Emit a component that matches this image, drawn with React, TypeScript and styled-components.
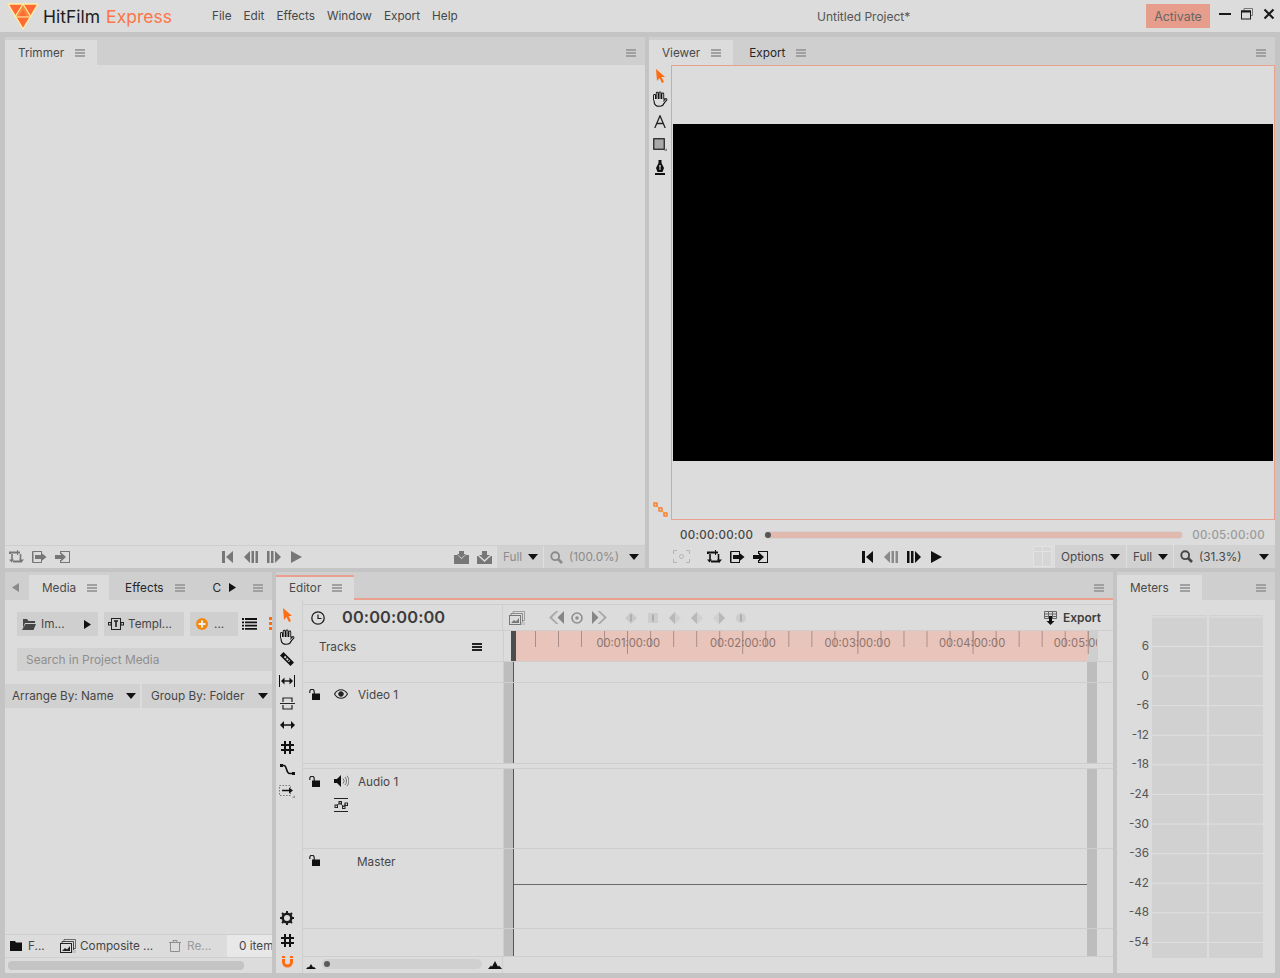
import React from 'react';
import styled, { createGlobalStyle } from 'styled-components';

const GlobalStyle = createGlobalStyle`
    html, body {
        margin: 0;
        padding: 0;
        background: #c4c4c4;
    }
    * {
        box-sizing: border-box;
    }
    svg {
        display: block;
        flex: none;
    }
`;

const SALMON = '#e9a08e';
const PANEL = '#dcdcdc';
const STRIP = '#cfcfcf';
const LINE = '#cecece';
const ORANGE = '#ff6d10';

const St = {
    Page: styled.div`
        width: 1280px;
        height: 978px;
        overflow: hidden;
        display: flex;
        flex-direction: column;
        background: #c4c4c4;
        font-family: Inter, 'Liberation Sans', sans-serif;
        font-size: 11.75px;
        color: #464646;
    `,
    TitleBar: styled.header`
        height: 32px;
        flex: none;
        display: grid;
        grid-template-columns: 212px 605px 329px 64px 1fr;
        align-items: center;
        background: ${PANEL};
    `,
    Brand: styled.div`
        display: flex;
        align-items: center;
        gap: 4px;
        padding-left: 7px;
        font-size: 17.5px;
        color: #1d1d1d;
        span {
            color: #ff7448;
            margin-left: 6px;
        }
    `,
    Menu: styled.nav`
        display: flex;
        gap: 12px;
        margin-top: -1px;
    `,
    ProjectTitle: styled.div`
        font-size: 12px;
        color: #555;
    `,
    Activate: styled.div`
        height: 24px;
        display: flex;
        align-items: center;
        justify-content: center;
        background: #e69d8b;
        color: #666;
        font-size: 12.4px;
    `,
    WindowControls: styled.div`
        display: flex;
        align-items: center;
        gap: 10px;
        padding-left: 9px;
        margin-top: -4px;
    `,
    Workspace: styled.main`
        flex: 1;
        display: flex;
        flex-direction: column;
        gap: 4px;
        padding: 5px;
    `,
    TopRow: styled.div`
        height: 531px;
        display: flex;
        gap: 4px;
    `,
    BottomRow: styled.div`
        height: 401px;
        display: flex;
        gap: 4px;
    `,
    Panel: styled.section<{ $w: number }>`
        width: ${({ $w }) => $w}px;
        flex: none;
        display: flex;
        flex-direction: column;
        background: ${PANEL};
        overflow: hidden;
    `,
    Strip: styled.div<{ $accent?: boolean }>`
        height: 28px;
        flex: none;
        display: flex;
        gap: 3px;
        padding-top: 3px;
        background: ${STRIP};
        border-bottom: ${({ $accent }) => ($accent ? `2px solid ${SALMON}` : 'none')};
    `,
    Tab: styled.div<{ $active?: boolean; $accent?: boolean; $gap?: number }>`
        height: 25px;
        flex: none;
        display: flex;
        align-items: center;
        gap: ${({ $gap }) => $gap ?? 11}px;
        padding: 0 12px ${({ $accent }) => ($accent ? '2px' : '0')} 13px;
        background: ${({ $active }) => ($active ? PANEL : 'transparent')};
        color: ${({ $active }) => ($active ? '#4a4a4a' : '#262626')};
        border-top: ${({ $accent }) => ($accent ? `2px solid ${SALMON}` : 'none')};
        margin-bottom: ${({ $accent }) => ($accent ? '-2px' : '0')};
    `,
    StripEnd: styled.div`
        margin-left: auto;
        height: 25px;
        flex: none;
        display: flex;
        align-items: center;
        padding-right: 9px;
    `,
    StripArrow: styled.div<{ $w: number }>`
        width: ${({ $w }) => $w}px;
        height: 25px;
        flex: none;
        display: flex;
        align-items: center;
        justify-content: center;
    `,
    Hamburger: styled.div<{ $dark?: boolean }>`
        width: 10px;
        height: 8px;
        border-top: 2px solid ${({ $dark }) => ($dark ? '#222' : '#a0a0a0')};
        border-bottom: 2px solid ${({ $dark }) => ($dark ? '#222' : '#a0a0a0')};
        position: relative;
        &::after {
            content: '';
            position: absolute;
            left: 0;
            right: 0;
            top: 1px;
            height: 2px;
            background: ${({ $dark }) => ($dark ? '#222' : '#a0a0a0')};
        }
    `,
    EmptyBody: styled.div`
        flex: 1;
    `,
    Footer: styled.div`
        height: 23px;
        flex: none;
        display: flex;
        align-items: stretch;
        border-top: 1px solid ${LINE};
    `,
    IconRow: styled.div<{ $ml?: number; $auto?: boolean }>`
        display: flex;
        align-items: center;
        margin-left: ${({ $ml, $auto }) => ($auto ? 'auto' : `${$ml ?? 0}px`)};
    `,
    IconBtn: styled.div<{ $c?: string; $w?: number }>`
        width: ${({ $w }) => $w ?? 23}px;
        flex: none;
        display: flex;
        align-items: center;
        justify-content: center;
        color: ${({ $c }) => $c ?? '#111'};
    `,
    Dropdown: styled.div<{ $w: number; $off?: boolean }>`
        width: ${({ $w }) => $w}px;
        flex: none;
        display: flex;
        align-items: center;
        gap: 6px;
        padding: 0 6px;
        background: #d1d1d1;
        border-left: 1px solid #dfdfdf;
        color: ${({ $off }) => ($off ? '#8b8b8b' : '#474747')};
    `,
    DropArrow: styled.div`
        margin-left: auto;
        width: 0;
        height: 0;
        flex: none;
        border-left: 5px solid transparent;
        border-right: 5px solid transparent;
        border-top: 6px solid #111;
    `,
    ViewerBody: styled.div`
        height: 455px;
        flex: none;
        display: flex;
    `,
    ViewerTools: styled.div`
        width: 22px;
        flex: none;
        display: flex;
        flex-direction: column;
        margin-top: -1px;
        padding-bottom: 3px;
    `,
    Tool: styled.div<{ $h: number; $c?: string; $push?: boolean }>`
        height: ${({ $h }) => $h}px;
        flex: none;
        display: flex;
        align-items: center;
        justify-content: center;
        color: ${({ $c }) => $c ?? '#111'};
        margin-top: ${({ $push }) => ($push ? 'auto' : '0')};
    `,
    Canvas: styled.div`
        flex: 1;
        display: flex;
        align-items: center;
        justify-content: center;
        border: 1px solid ${SALMON};
    `,
    Picture: styled.div`
        width: 600px;
        height: 337px;
        background: #000;
    `,
    ScrubRow: styled.div`
        height: 25px;
        flex: none;
        display: flex;
        align-items: center;
        padding: 4px 0 0 31px;
    `,
    TimeCode: styled.div<{ $off?: boolean }>`
        font-size: 11.5px;
        font-weight: 500;
        letter-spacing: 0.3px;
        color: ${({ $off }) => ($off ? '#9a9a9a' : '#444')};
    `,
    ScrubTrack: styled.div`
        width: 417px;
        height: 6px;
        margin: 0 10px 0 12px;
        display: flex;
        align-items: center;
        border-radius: 3px;
        background: #e2b9af;
        box-shadow: 0 0 0 1px #d3d3d3;
    `,
    ScrubDot: styled.div`
        width: 6px;
        height: 6px;
        border-radius: 50%;
        background: #555;
    `,
    ViewerFooter: styled.div`
        height: 23px;
        flex: none;
        display: flex;
        align-items: stretch;
        padding-left: 21px;
    `,
    GridSwatch: styled.div`
        width: 17px;
        margin: 2px 3px 2px 0;
        background: #d1d1d1;
        display: grid;
        grid-template-columns: 1fr 1fr;
        grid-template-rows: 4px 1fr;
        gap: 1px;
        div {
            background: #d6d6d6;
            outline: 0.5px solid #e2e2e2;
        }
    `,
    MediaBody: styled.div`
        flex: 1;
        display: flex;
        flex-direction: column;
        padding-top: 12px;
        overflow: hidden;
    `,
    MediaTools: styled.div`
        height: 24px;
        flex: none;
        display: flex;
        gap: 6px;
        margin-left: 12px;
    `,
    MediaButton: styled.div<{ $w: number; $pad: number; $gap: number }>`
        width: ${({ $w }) => $w}px;
        flex: none;
        display: flex;
        align-items: center;
        gap: ${({ $gap }) => $gap}px;
        padding: 0 7px 0 ${({ $pad }) => $pad}px;
        background: ${STRIP};
    `,
    ButtonArrow: styled.div`
        margin-left: auto;
    `,
    MediaPlain: styled.div`
        width: 16px;
        flex: none;
        margin-left: -3px;
        display: flex;
        align-items: center;
        justify-content: center;
    `,
    OrangeDots: styled.div`
        width: 3px;
        height: 13px;
        margin: 5px 0 0 6px;
        flex: none;
        background: repeating-linear-gradient(${ORANGE} 0 3px, transparent 3px 5px);
    `,
    Search: styled.div`
        height: 23px;
        flex: none;
        margin: 12px 0 0 12px;
        padding-left: 9px;
        display: flex;
        align-items: center;
        background: #d1d1d1;
        color: #8f8f8f;
        font-size: 11.9px;
    `,
    ArrangeRow: styled.div`
        height: 24px;
        flex: none;
        margin-top: 13px;
        display: flex;
        gap: 2px;
    `,
    ArrangeItem: styled.div<{ $w: number; $pad: number }>`
        width: ${({ $w }) => $w}px;
        display: flex;
        align-items: center;
        padding: 0 4px 1px ${({ $pad }) => $pad}px;
        background: #d1d1d1;
    `,
    MediaFooter: styled.div`
        height: 24px;
        flex: none;
        display: flex;
        align-items: stretch;
        border-top: 1px solid ${LINE};
        border-bottom: 1px solid ${LINE};
        white-space: nowrap;
    `,
    MediaFootItem: styled.div<{ $w: number; $gap: number; $off?: boolean }>`
        width: ${({ $w }) => $w}px;
        flex: none;
        display: flex;
        align-items: center;
        gap: ${({ $gap }) => $gap}px;
        padding-left: 5px;
        color: ${({ $off }) => ($off ? '#9a9a9a' : '#464646')};
        svg {
            color: ${({ $off }) => ($off ? '#8f8f8f' : '#111')};
        }
    `,
    ItemCount: styled.div`
        flex: 1;
        display: flex;
        align-items: center;
        padding-left: 12px;
        background: #e8e8e8;
        overflow: hidden;
    `,
    MediaScrollRow: styled.div`
        height: 15px;
        flex: none;
        padding: 3px 0 0 3px;
    `,
    MediaThumb: styled.div`
        width: 236px;
        height: 9px;
        border-radius: 4px;
        background: #c4c4c4;
    `,
    EditorBody: styled.div`
        flex: 1;
        display: flex;
        min-height: 0;
    `,
    EditorTools: styled.div`
        width: 27px;
        flex: none;
        display: flex;
        flex-direction: column;
        padding: 4px 4px 0 0;
        border-right: 1px solid ${LINE};
    `,
    EditorMain: styled.div`
        flex: 1;
        display: flex;
        flex-direction: column;
        padding-top: 4px;
        overflow: hidden;
    `,
    Row: styled.div<{ $h: number }>`
        height: ${({ $h }) => $h}px;
        flex: none;
        display: flex;
        border-bottom: 1px solid ${LINE};
    `,
    TrackHead: styled.div`
        width: 200px;
        flex: none;
        display: flex;
        flex-direction: column;
        padding: 3px 0 0 6px;
    `,
    TrackLine: styled.div<{ $mt?: number }>`
        display: flex;
        align-items: center;
        height: 16px;
        margin-top: ${({ $mt }) => $mt ?? 0}px;
    `,
    TrackSlot: styled.div<{ $w: number; $ml?: number }>`
        width: ${({ $w }) => $w}px;
        flex: none;
        margin-left: ${({ $ml }) => $ml ?? 0}px;
        display: flex;
        align-items: center;
        justify-content: center;
    `,
    TrackName: styled.div<{ $ml: number; $pt: number }>`
        margin-left: ${({ $ml }) => $ml}px;
        padding-top: ${({ $pt }) => $pt}px;
    `,
    Gutter: styled.div<{ $clear?: boolean }>`
        width: 11px;
        flex: none;
        position: relative;
        background: ${({ $clear }) => ($clear ? 'transparent' : '#bdbdbd')};
        border-right: ${({ $clear }) => ($clear ? 'none' : '1px solid #555')};
        border-left: 1px solid ${LINE};
    `,
    Playhead: styled.div`
        position: absolute;
        z-index: 1;
        top: 0;
        bottom: 0;
        left: 7px;
        width: 5px;
        background: #4d4d4d;
    `,
    Lane: styled.div`
        width: 573px;
        flex: none;
    `,
    MasterLevel: styled.div`
        height: 1px;
        margin-top: 35px;
        background: #6a6a6a;
    `,
    VScroll: styled.div`
        width: 10px;
        flex: none;
        background: #bdbdbd;
    `,
    HeaderRow: styled.div`
        height: 27px;
        flex: none;
        display: flex;
        border-top: 1px solid ${LINE};
        border-bottom: 1px solid ${LINE};
    `,
    ClockCell: styled.div`
        width: 200px;
        flex: none;
        display: flex;
        align-items: center;
        gap: 17px;
        padding-left: 8px;
        border-right: 1px solid ${LINE};
    `,
    MainTime: styled.div`
        font-size: 16.4px;
        font-weight: 600;
        letter-spacing: 0.1px;
        color: #3c3c3c;
        margin-top: -1px;
    `,
    ComposerTools: styled.div`
        flex: 1;
        display: flex;
        align-items: center;
        padding-left: 6px;
    `,
    ExportLink: styled.div`
        margin-left: auto;
        margin-right: 12px;
        display: flex;
        align-items: center;
        gap: 6px;
        font-size: 12px;
        font-weight: 600;
        color: #3e3e3e;
    `,
    TracksCell: styled.div`
        width: 200px;
        flex: none;
        display: flex;
        align-items: center;
        justify-content: space-between;
        padding: 2px 21px 0 16px;
    `,
    Ruler: styled.div`
        width: 584px;
        flex: none;
        display: flex;
        padding-left: 57px;
        overflow: hidden;
        white-space: nowrap;
        font-size: 11.2px;
        color: #8d736d;
        line-height: 25px;
        border-right: 1px solid ${LINE};
        background-color: #cfcfcf;
        background-image: linear-gradient(90deg, #a98c85 1px, transparent 1px),
            linear-gradient(90deg, #a98c85 1px, transparent 1px), linear-gradient(#e8c4ba, #e8c4ba);
        background-size: 23.04px 16px, 115.2px 23px, 573px 100%;
        background-position: 21px 0, 113px 0, 0 0;
        background-repeat: repeat-x, repeat-x, no-repeat;
    `,
    RulerLabel: styled.div`
        width: 114.6px;
        flex: none;
        text-align: center;
    `,
    BottomBar: styled.div`
        flex: 1;
        display: flex;
    `,
    ZoomCell: styled.div`
        width: 200px;
        flex: none;
        display: flex;
        align-items: flex-end;
        gap: 6px;
        padding: 0 0 4px 3px;
        border-right: 1px solid ${LINE};
    `,
    ZoomTrack: styled.div`
        width: 162px;
        height: 10px;
        border-radius: 5px;
        background: #d0d0d0;
        display: flex;
        align-items: center;
        padding-left: 2px;
    `,
    ZoomDot: styled.div`
        width: 6px;
        height: 6px;
        border-radius: 50%;
        background: #5c5c5c;
    `,
    MeterBody: styled.div`
        flex: 1;
        display: flex;
        padding: 15px 12px 20px 0;
    `,
    MeterScale: styled.div`
        width: 35px;
        flex: none;
        padding: 17px 3px 0 0;
        text-align: right;
        color: #555;
    `,
    MeterTick: styled.div`
        height: 29.6px;
        line-height: 29.6px;
    `,
    MeterBars: styled.div`
        flex: 1;
        display: flex;
        gap: 2px;
    `,
    MeterBar: styled.div`
        flex: 1;
        background-color: #d1d1d1;
        background-image: linear-gradient(#e0e0e0 1px, transparent 1px);
        background-size: 100% 29.6px;
        background-position: 0 1.4px;
    `,
};

const Ico = ({ s = 16, h, children }: { s?: number; h?: number; children: React.ReactNode }) => (
    <svg width={s} height={h ?? s} viewBox={`0 0 ${s} ${h ?? s}`} fill="currentColor">
        {children}
    </svg>
);

const Logo = () => (
    <svg width="32" height="28" viewBox="0 0 32 28">
        <path d="M1 2h30L16 27z" fill="#ff6a35" stroke="#fff0a6" strokeWidth="1.4" strokeLinejoin="round" />
        <path d="M16 2l8 13H8z" fill="#f58a3c" stroke="#fff0a6" strokeWidth="1.2" strokeLinejoin="round" />
        <path d="M16 8l3.6 6h-7.2z" fill="#ff6a35" />
    </svg>
);

const Minimize = () => (
    <Ico s={12} h={2}>
        <rect width="12" height="2" fill="#1a1a1a" />
    </Ico>
);

const Restore = () => (
    <svg width="12" height="12" viewBox="0 0 12 12" fill="none">
        <path d="M3 2.5V.5h8.5v7H9.5" stroke="#777" />
        <rect x=".5" y="3" width="9" height="8" stroke="#1a1a1a" />
        <rect x="0" y="2.5" width="10" height="2" fill="#1a1a1a" />
    </svg>
);

const Close = () => (
    <svg width="12" height="12" viewBox="0 0 12 12">
        <path d="M1.5 1.5l9 9M10.5 1.5l-9 9" stroke="#1a1a1a" strokeWidth="2.1" />
    </svg>
);

const LoopIcon = () => (
    <svg width="15" height="14" viewBox="0 0 15 14" fill="none" stroke="currentColor" strokeWidth="2">
        <path d="M1 4V2.5h10M12 10v1.5H4" />
        <path d="M3 4v6M11.5 4v7" strokeWidth="1.6" />
        <path d="M0 9.5h5L2.5 12.5zM10 9.5h5l-2.5 3z" fill="currentColor" stroke="none" />
        <path d="M8.5 0v5" strokeWidth="1" />
    </svg>
);

const OutIcon = () => (
    <Ico s={15} h={12}>
        <path d="M1 0h9v3H9V1H1.5v10H9V9h1v3H1a1 1 0 0 1-1-1V1a1 1 0 0 1 1-1z" />
        <path d="M3 4h6V1.5L14.5 6 9 10.5V8H3z" />
    </Ico>
);

const InIcon = () => (
    <Ico s={15} h={12}>
        <path d="M5 0h10v12H5V9h1v2h8V1H6v2H5z" />
        <path d="M0 4h6V1.5L11 6l-5 4.5V8H0z" />
    </Ico>
);

const FirstIcon = () => (
    <Ico s={11} h={12}>
        <rect width="3" height="12" />
        <path d="M11 0v12L4 6z" />
    </Ico>
);
const PrevIcon = () => (
    <Ico s={14} h={12}>
        <path d="M6 0v12L0 6z" />
        <rect x="7.5" width="2.5" height="12" />
        <rect x="11.5" width="2.5" height="12" />
    </Ico>
);
const NextIcon = () => (
    <Ico s={14} h={12}>
        <rect width="2.5" height="12" />
        <rect x="4" width="2.5" height="12" />
        <path d="M8 0v12l6-6z" />
    </Ico>
);
const PlayIcon = () => (
    <Ico s={11} h={12}>
        <path d="M0 0v12l11-6z" />
    </Ico>
);

const Transport = ({ c, c2, ml }: { c: string; c2?: string; ml: number }) => (
    <St.IconRow $ml={ml}>
        <St.IconBtn $c={c}>
            <FirstIcon />
        </St.IconBtn>
        <St.IconBtn $c={c2 ?? c}>
            <PrevIcon />
        </St.IconBtn>
        <St.IconBtn $c={c}>
            <NextIcon />
        </St.IconBtn>
        <St.IconBtn $c={c}>
            <PlayIcon />
        </St.IconBtn>
    </St.IconRow>
);

const MagnifyIcon = () => (
    <svg width="13" height="13" viewBox="0 0 13 13" fill="none" stroke="currentColor">
        <circle cx="5.2" cy="5.2" r="3.9" strokeWidth="1.9" />
        <path d="M8 8l4 4" strokeWidth="2.6" />
    </svg>
);

const SnapA = () => (
    <Ico s={15} h={13}>
        <path d="M5 0h5v3h2l-4.5 4L3 3h2z" />
        <path d="M0 4h3.5l4 4 4-4H15v9H0z" />
    </Ico>
);
const SnapB = () => (
    <Ico s={15} h={13}>
        <path d="M5 0h5v4h3L7.5 9 2 4h3z" />
        <path d="M0 5h1l6.5 6 6.5-6h1v8H0z" />
    </Ico>
);

const ArrowTool = () => (
    <Ico s={11} h={14}>
        <path d="M1 0l9 8H6.5l2.5 5-2 1-2.5-5L2 12z" />
    </Ico>
);
// fingers are drawn twice, a thick dark stroke under a thin light one, to get an outlined hand
const HandTool = () => (
    <svg width="16" height="16" viewBox="0 0 16 16" fill="none" strokeLinecap="round">
        <path d="M2.5 8V4.5M5.2 7V2.2M8 7V1.8M10.8 7V3M14 8.5l-3 3.5" stroke="#111" strokeWidth="2.8" />
        <path d="M1.8 7.5h10.2v3.5c0 2.700-2 4.300-4.800 4.300-3.200 0-4.700-2-5-4z" fill="#dcdcdc" stroke="#111" strokeWidth="1.1" />
        <path d="M2.500 9V4.500M5.200 9V2.200M8 9V1.800M10.800 9V3M14 8.500l-3 3.500" stroke="#dcdcdc" strokeWidth="1" />
    </svg>
);
const TextTool = () => (
    <svg width="12" height="13" viewBox="0 0 12 13" fill="none" stroke="#222" strokeWidth="1.3">
        <path d="M.8 13L6 .8 11.2 13M2.800 8.500h6.400" />
    </svg>
);
const ShapeTool = () => (
    <svg width="14" height="13" viewBox="0 0 14 13">
        <rect x=".75" y=".75" width="10.5" height="10.5" fill="#a9a9a9" stroke="#1c1c1c" strokeWidth="1.2" />
        <path d="M14 10v3h-3z" fill="#888" />
    </svg>
);
const PenTool = () => (
    <Ico s={10} h={15}>
        <path d="M3.5 0h3v3L9 8l-1.500 4h-5L1 8l2.500-5zM5 5a1 1 0 0 0-.5 1.800V10h1V6.800A1 1 0 0 0 5 5z" />
        <rect y="13" width="10" height="2" />
    </Ico>
);
const NodesIcon = () => (
    <svg width="15" height="15" viewBox="0 0 15 15" fill="#dcdcdc" stroke="#ff6d10" strokeWidth="1.2">
        <path d="M3 3l9 9" stroke="#f5b56a" />
        <rect x="1" y="1" width="3" height="3" />
        <rect x="6" y="6" width="3" height="3" />
        <rect x="11" y="11" width="3" height="3" />
    </svg>
);
const FocusIcon = () => (
    <svg width="17" height="13" viewBox="0 0 17 13" fill="none" stroke="#b4b4b4">
        <path d="M.5 4V.5H4M13 .5h3.500V4M.5 9v3.500H4M13 12.500h3.500V9" />
        <circle cx="8.5" cy="6.5" r="2" />
    </svg>
);

const FolderIcon = () => (
    <Ico s={14} h={12}>
        <path d="M0 1h5l1.500 2H13v2H3L1 10V1z" />
        <path d="M3.500 6H14l-2.500 6H0z" />
    </Ico>
);
const TemplateIcon = () => (
    <svg width="16" height="12" viewBox="0 0 16 12" fill="none" stroke="#222">
        <rect x="3.5" y=".5" width="9" height="11" />
        <path d="M6 3h4M8 3v6" strokeWidth="1.6" />
        <rect x=".5" y="4.5" width="2.5" height="2.5" />
        <rect x="13" y="4.5" width="2.5" height="2.5" />
    </svg>
);
const PlusIcon = () => (
    <svg width="12" height="12" viewBox="0 0 12 12">
        <circle cx="6" cy="6" r="6" fill="#f28a12" />
        <path d="M6 2.500v7M2.500 6h7" stroke="#eee" strokeWidth="2" />
    </svg>
);
const ListIcon = () => (
    <svg width="15" height="12" viewBox="0 0 15 12">
        <path d="M0 1h2M3 1h12M0 4.300h2M3 4.300h12M0 7.600h2M3 7.600h12M0 10.900h2M3 10.900h12" stroke="#111" strokeWidth="1.8" />
    </svg>
);
const SmallArrow = ({ right, c }: { right?: boolean; c: string }) => (
    <svg width="7" height="9" viewBox="0 0 7 9">
        <path d={right ? 'M0 0v9l7-4.500z' : 'M7 0v9L0 4.500z'} fill={c} />
    </svg>
);
const SolidFolder = () => (
    <Ico s={12} h={10}>
        <path d="M0 0h5l1 1.500h6V10H0z" />
    </Ico>
);
const CompStack = ({ c = '#222' }: { c?: string }) => (
    <svg width="16" height="14" viewBox="0 0 16 14" fill="none" stroke={c}>
        <path d="M4 2.500V.5h11.500v9H13" strokeOpacity=".6" />
        <path d="M2 4.500V2.500h11.500v9H11" strokeOpacity=".8" />
        <rect x=".5" y="4.5" width="11" height="9" fill="#dcdcdc" />
        <path d="M2 12l3-3 2 1.500L10 7v5z" fill={c} stroke="none" />
        <rect x="12" y="11" width="4" height="3" fill="#c4c4c4" stroke="none" />
    </svg>
);
const TrashIcon = () => (
    <svg width="12" height="12" viewBox="0 0 12 12" fill="none" stroke="currentColor">
        <path d="M0 2.500h12M4 2.500V.5h4v2M1.500 2.500v9h9v-9" />
    </svg>
);

const RazorTool = () => (
    <svg width="16" height="16" viewBox="0 0 16 16">
        <path d="M4.500 1L15 11.500 11.500 15 1 4.500z" fill="#111" />
        <path d="M5.500 5.500l5 5" stroke="#ddd" strokeWidth="1.8" strokeDasharray="2 1" />
    </svg>
);
const SlipTool = () => (
    <svg width="16" height="12" viewBox="0 0 16 12" fill="#111" stroke="#111">
        <path d="M.5 0v12M15.500 0v12" />
        <path d="M3 6h10" strokeWidth="1.4" />
        <path d="M2 6l3.500-3.500v7zM14 6l-3.500-3.500v7z" stroke="none" />
    </svg>
);
const RippleTool = () => (
    <svg width="15" height="13" viewBox="0 0 15 13" fill="none" stroke="#222" strokeWidth="1.2">
        <path d="M3 5V1h9v4M3 8v4h9V8M0 6.500h15" />
    </svg>
);
const RollTool = () => (
    <svg width="15" height="8" viewBox="0 0 15 8">
        <path d="M3 4h9" stroke="#111" strokeWidth="1.5" />
        <path d="M0 4l4-4v8zM15 4l-4-4v8z" fill="#111" />
    </svg>
);
const HashTool = () => (
    <svg width="13" height="13" viewBox="0 0 13 13" stroke="#111" strokeWidth="2">
        <path d="M4 0v13M9 0v13M0 4h13M0 9h13" />
    </svg>
);
const CurveTool = () => (
    <svg width="15" height="11" viewBox="0 0 15 11" fill="none">
        <path d="M2 1.500h2c3 0 2 8 5.500 8H13" stroke="#111" strokeWidth="1.6" />
        <rect width="3" height="3" fill="#111" />
        <rect width="3" height="3" x="12" y="8" fill="#111" />
    </svg>
);
const MoveOutTool = () => (
    <svg width="16" height="13" viewBox="0 0 16 13" fill="none">
        <rect x=".5" y=".5" width="11" height="10" stroke="#777" strokeDasharray="1.500 1.500" />
        <path d="M3 5.500h9" stroke="#111" strokeWidth="1.5" />
        <path d="M10 2.500l4 3-4 3z" fill="#111" />
        <path d="M16 10v3h-3z" fill="#999" />
    </svg>
);
const GearIcon = () => (
    <svg width="14" height="14" viewBox="0 0 14 14" fill="none" stroke="#1c1c1c">
        <circle cx="7" cy="7" r="4.3" strokeWidth="2.6" />
        <path d="M7 0v2.500M7 11.500V14M0 7h2.500M11.500 7H14M2 2l1.800 1.800M10.200 10.200L12 12M12 2l-1.800 1.800M3.800 10.200L2 12" strokeWidth="2" />
    </svg>
);
const MagnetIcon = () => (
    <svg width="11" height="12" viewBox="0 0 11 12" fill="none">
        <path d="M1.500 0v6a4 4 0 0 0 8 0V0" stroke={ORANGE} strokeWidth="3" />
        <path d="M0 2.500h3M8 2.500h3" stroke="#dcdcdc" />
    </svg>
);

const ClockIcon = () => (
    <svg width="14" height="14" viewBox="0 0 14 14" fill="none" stroke="#1c1c1c">
        <circle cx="7" cy="7" r="6.2" strokeWidth="1.3" />
        <path d="M7 3.500V7.500H10.500" strokeWidth="1.2" />
    </svg>
);
const BackKeys = () => (
    <svg width="15" height="13" viewBox="0 0 15 13">
        <path d="M7 0L0 6.500 7 13h2.500L3 6.500 9.500 0z" fill="#aaa" />
        <path d="M15 0v13L8.500 6.500z" fill="#868686" />
    </svg>
);
const Target = () => (
    <svg width="12" height="12" viewBox="0 0 12 12" fill="none" stroke="#8e8e8e">
        <circle cx="6" cy="6" r="5" strokeWidth="1.6" />
        <circle cx="6" cy="6" r="1.8" fill="#8e8e8e" stroke="none" />
    </svg>
);
const ForwardKeys = () => (
    <svg width="15" height="13" viewBox="0 0 15 13">
        <path d="M0 0v13l6.500-6.500z" fill="#868686" />
        <path d="M8 0l7 6.500L8 13H5.500L12 6.500 5.500 0z" fill="#aaa" />
    </svg>
);
const Key = ({ kind }: { kind: 'diamond' | 'square' | 'left' | 'right' | 'pill' }) => (
    <svg width="14" height="12" viewBox="0 0 14 12">
        {kind === 'square' ? (
            <rect x="2" y="1" width="10" height="10" fill="#cdcdcd" />
        ) : kind === 'pill' ? (
            <circle cx="7" cy="6" r="5" fill="#cdcdcd" />
        ) : (
            <path d="M7 0l6 6-6 6-6-6z" fill={kind === 'diamond' ? '#c9c9c9' : '#d0d0d0'} />
        )}
        {kind === 'left' && <path d="M7 0v12L1 6z" fill="#b8b8b8" />}
        {kind === 'right' && <path d="M7 0v12l6-6z" fill="#b8b8b8" />}
        {(kind === 'diamond' || kind === 'square' || kind === 'pill') && <rect x="6" y="2.5" width="2" height="7" fill="#aeaeae" />}
    </svg>
);
const ExportIcon = () => (
    <svg width="13" height="14" viewBox="0 0 13 14">
        <path d="M.5.500h12v7H.5zM4.500.500v7M8.500.500v7M.5 3h12M.5 5.500h12" fill="none" stroke="#666" />
        <path d="M5 5h3v5h2.500l-4 4-4-4H5z" fill="#111" />
    </svg>
);

const LockIcon = () => (
    <svg width="12" height="11" viewBox="0 0 12 11" fill="none">
        <path d="M.8 4V2.500a2.200 2.200 0 0 1 4.400 0V5" stroke="#111" strokeWidth="1.1" />
        <rect x="3" y="4.5" width="8" height="6.5" fill="#111" />
    </svg>
);
const EyeIcon = () => (
    <svg width="14" height="10" viewBox="0 0 14 10" fill="none" stroke="#222">
        <path d="M.5 5C2.500 1.500 4.800.7 7 .7s4.500.8 6.500 4.300C11.500 8.500 9.200 9.300 7 9.300S2.500 8.500.5 5z" strokeWidth="1.1" />
        <circle cx="7" cy="5" r="2.3" fill="#222" />
    </svg>
);
const SpeakerIcon = () => (
    <svg width="15" height="12" viewBox="0 0 15 12" fill="none">
        <path d="M0 4h3l4-4v12L3 8H0z" fill="#111" />
        <path d="M9 3.500a3.500 3.500 0 0 1 0 5M11 2a6 6 0 0 1 0 8M13 .8a8 8 0 0 1 0 10.400" stroke="#777" />
    </svg>
);
const AutomationIcon = () => (
    <svg width="14" height="14" viewBox="0 0 14 14" fill="none" stroke="#222">
        <path d="M0 .5h14M0 13.500h14" />
        <path d="M2.500 8L6 4.500 9.500 9l2-3" strokeWidth=".8" />
        <rect x="1" y="7" width="2.5" height="2.5" />
        <rect x="5" y="3.5" width="2.5" height="2.5" />
        <rect x="8.5" y="8" width="2.5" height="2.5" />
        <rect x="11" y="5" width="2.5" height="2.5" />
    </svg>
);
const MountainIcon = ({ w, h }: { w: number; h: number }) => (
    <svg width={w} height={h} viewBox="0 0 14 7" preserveAspectRatio="none">
        <path d="M0 7l3-3 1 1 3-5 3 5 1-1 3 3z" fill="#111" />
    </svg>
);

const menuItems = ['File', 'Edit', 'Effects', 'Window', 'Export', 'Help'];
const rulerLabels = ['00:01:00:00', '00:02:00:00', '00:03:00:00', '00:04:00:00', '00:05:00:00'];
const meterTicks = ['6', '0', '-6', '-12', '-18', '-24', '-30', '-36', '-42', '-48', '-54'];
const keyIcons = ['diamond', 'square', 'left', 'left', 'right', 'pill'] as const;

const TitleBar = () => (
    <St.TitleBar>
        <St.Brand>
            <Logo />
            <div>
                HitFilm<span>Express</span>
            </div>
        </St.Brand>
        <St.Menu>
            {menuItems.map((m) => (
                <div key={m}>{m}</div>
            ))}
        </St.Menu>
        <St.ProjectTitle>Untitled Project*</St.ProjectTitle>
        <St.Activate>Activate</St.Activate>
        <St.WindowControls>
            <Minimize />
            <Restore />
            <Close />
        </St.WindowControls>
    </St.TitleBar>
);

const Tab = ({ label, active, accent }: { label: string; active?: boolean; accent?: boolean }) => (
    <St.Tab $active={active} $accent={accent}>
        {label}
        <St.Hamburger />
    </St.Tab>
);

const StripMenu = () => (
    <St.StripEnd>
        <St.Hamburger />
    </St.StripEnd>
);

const Dropdown = ({ w, off, icon, label }: { w: number; off?: boolean; icon?: boolean; label: string }) => (
    <St.Dropdown $w={w} $off={off}>
        {icon && <MagnifyIcon />}
        {label}
        <St.DropArrow />
    </St.Dropdown>
);

const TrimmerPanel = () => (
    <St.Panel $w={640}>
        <St.Strip>
            <Tab label="Trimmer" active />
            <StripMenu />
        </St.Strip>
        <St.EmptyBody />
        <St.Footer>
            <St.IconRow $ml={0}>
                <St.IconBtn $c="#777">
                    <LoopIcon />
                </St.IconBtn>
                <St.IconBtn $c="#777">
                    <OutIcon />
                </St.IconBtn>
                <St.IconBtn $c="#777">
                    <InIcon />
                </St.IconBtn>
            </St.IconRow>
            <Transport c="#777" ml={142} />
            <St.IconRow $auto>
                <St.IconBtn $c="#777">
                    <SnapA />
                </St.IconBtn>
                <St.IconBtn $c="#777">
                    <SnapB />
                </St.IconBtn>
            </St.IconRow>
            <Dropdown w={47} off label="Full" />
            <Dropdown w={102} off icon label="(100.0%)" />
        </St.Footer>
    </St.Panel>
);

const ViewerPanel = () => (
    <St.Panel $w={626}>
        <St.Strip>
            <Tab label="Viewer" active />
            <Tab label="Export" />
            <StripMenu />
        </St.Strip>
        <St.ViewerBody>
            <St.ViewerTools>
                <St.Tool $h={23} $c={ORANGE}>
                    <ArrowTool />
                </St.Tool>
                <St.Tool $h={23}>
                    <HandTool />
                </St.Tool>
                <St.Tool $h={23}>
                    <TextTool />
                </St.Tool>
                <St.Tool $h={23}>
                    <ShapeTool />
                </St.Tool>
                <St.Tool $h={23}>
                    <PenTool />
                </St.Tool>
                <St.Tool $h={15} $push>
                    <NodesIcon />
                </St.Tool>
            </St.ViewerTools>
            <St.Canvas>
                <St.Picture />
            </St.Canvas>
        </St.ViewerBody>
        <St.ScrubRow>
            <St.TimeCode>00:00:00:00</St.TimeCode>
            <St.ScrubTrack>
                <St.ScrubDot />
            </St.ScrubTrack>
            <St.TimeCode $off>00:05:00:00</St.TimeCode>
        </St.ScrubRow>
        <St.ViewerFooter>
            <St.IconBtn>
                <FocusIcon />
            </St.IconBtn>
            <St.IconRow $ml={10}>
                <St.IconBtn>
                    <LoopIcon />
                </St.IconBtn>
                <St.IconBtn>
                    <OutIcon />
                </St.IconBtn>
                <St.IconBtn>
                    <InIcon />
                </St.IconBtn>
            </St.IconRow>
            <Transport c="#111" c2="#8a8a8a" ml={84} />
            <St.IconRow $auto />
            <St.GridSwatch>
                <div />
                <div />
                <div />
                <div />
            </St.GridSwatch>
            <Dropdown w={72} label="Options" />
            <Dropdown w={47} label="Full" />
            <Dropdown w={102} icon label="(31.3%)" />
        </St.ViewerFooter>
    </St.Panel>
);

const MediaPanel = () => (
    <St.Panel $w={267}>
        <St.Strip>
            <St.StripArrow $w={21}>
                <SmallArrow c="#8a8a8a" />
            </St.StripArrow>
            <Tab label="Media" active />
            <Tab label="Effects" />
            <St.Tab $gap={8}>
                C<SmallArrow right c="#111" />
            </St.Tab>
            <StripMenu />
        </St.Strip>
        <St.MediaBody>
            <St.MediaTools>
                <St.MediaButton $w={81} $pad={5} $gap={5}>
                    <FolderIcon />
                    Im...
                    <St.ButtonArrow>
                        <SmallArrow right c="#111" />
                    </St.ButtonArrow>
                </St.MediaButton>
                <St.MediaButton $w={80} $pad={4} $gap={4}>
                    <TemplateIcon />
                    Templ...
                </St.MediaButton>
                <St.MediaButton $w={48} $pad={6} $gap={6}>
                    <PlusIcon />
                    ...
                </St.MediaButton>
                <St.MediaPlain>
                    <ListIcon />
                </St.MediaPlain>
                <St.OrangeDots />
            </St.MediaTools>
            <St.Search>Search in Project Media</St.Search>
            <St.ArrangeRow>
                <St.ArrangeItem $w={135} $pad={7}>
                    Arrange By: Name
                    <St.DropArrow />
                </St.ArrangeItem>
                <St.ArrangeItem $w={130} $pad={9}>
                    Group By: Folder
                    <St.DropArrow />
                </St.ArrangeItem>
            </St.ArrangeRow>
            <St.EmptyBody />
            <St.MediaFooter>
                <St.MediaFootItem $w={50} $gap={6}>
                    <SolidFolder />
                    F...
                </St.MediaFootItem>
                <St.MediaFootItem $w={109} $gap={4}>
                    <CompStack />
                    Composite ...
                </St.MediaFootItem>
                <St.MediaFootItem $w={63} $gap={6} $off>
                    <TrashIcon />
                    Re...
                </St.MediaFootItem>
                <St.ItemCount>0 items</St.ItemCount>
            </St.MediaFooter>
            <St.MediaScrollRow>
                <St.MediaThumb />
            </St.MediaScrollRow>
        </St.MediaBody>
    </St.Panel>
);

const TrackRow = ({ h, master, children }: { h: number; master?: boolean; children?: React.ReactNode }) => (
    <St.Row $h={h}>
        <St.TrackHead>{children}</St.TrackHead>
        <St.Gutter />
        <St.Lane>{master && <St.MasterLevel />}</St.Lane>
        <St.VScroll />
    </St.Row>
);

const EditorPanel = () => (
    <St.Panel $w={837}>
        <St.Strip $accent>
            <Tab label="Editor" active accent />
            <StripMenu />
        </St.Strip>
        <St.EditorBody>
            <St.EditorTools>
                <St.Tool $h={22} $c={ORANGE}>
                    <ArrowTool />
                </St.Tool>
                <St.Tool $h={22}>
                    <HandTool />
                </St.Tool>
                <St.Tool $h={22}>
                    <RazorTool />
                </St.Tool>
                <St.Tool $h={22}>
                    <SlipTool />
                </St.Tool>
                <St.Tool $h={22}>
                    <RippleTool />
                </St.Tool>
                <St.Tool $h={22}>
                    <RollTool />
                </St.Tool>
                <St.Tool $h={22}>
                    <HashTool />
                </St.Tool>
                <St.Tool $h={22}>
                    <CurveTool />
                </St.Tool>
                <St.Tool $h={22}>
                    <MoveOutTool />
                </St.Tool>
                <St.Tool $h={22} $push>
                    <GearIcon />
                </St.Tool>
                <St.Tool $h={22}>
                    <HashTool />
                </St.Tool>
                <St.Tool $h={22}>
                    <MagnetIcon />
                </St.Tool>
            </St.EditorTools>
            <St.EditorMain>
                <St.HeaderRow>
                    <St.ClockCell>
                        <ClockIcon />
                        <St.MainTime>00:00:00:00</St.MainTime>
                    </St.ClockCell>
                    <St.ComposerTools>
                        <CompStack c="#777" />
                        <St.IconRow $ml={24}>
                            <BackKeys />
                        </St.IconRow>
                        <St.IconRow $ml={7}>
                            <Target />
                        </St.IconRow>
                        <St.IconRow $ml={9}>
                            <ForwardKeys />
                        </St.IconRow>
                        <St.IconRow $ml={13}>
                            {keyIcons.map((k, i) => (
                                <St.IconBtn key={i} $w={22}>
                                    <Key kind={k} />
                                </St.IconBtn>
                            ))}
                        </St.IconRow>
                        <St.ExportLink>
                            <ExportIcon />
                            Export
                        </St.ExportLink>
                    </St.ComposerTools>
                </St.HeaderRow>
                <St.Row $h={31}>
                    <St.TracksCell>
                        Tracks
                        <St.Hamburger $dark />
                    </St.TracksCell>
                    <St.Gutter $clear>
                        <St.Playhead />
                    </St.Gutter>
                    <St.Ruler>
                        {rulerLabels.map((l) => (
                            <St.RulerLabel key={l}>{l}</St.RulerLabel>
                        ))}
                    </St.Ruler>
                </St.Row>
                <TrackRow h={21} />
                <TrackRow h={81}>
                    <St.TrackLine>
                        <St.TrackSlot $w={12}>
                            <LockIcon />
                        </St.TrackSlot>
                        <St.TrackSlot $w={40}>
                            <EyeIcon />
                        </St.TrackSlot>
                        <St.TrackName $ml={-3} $pt={2}>
                            Video 1
                        </St.TrackName>
                    </St.TrackLine>
                </TrackRow>
                <St.Row $h={5} />
                <TrackRow h={80}>
                    <St.TrackLine $mt={1}>
                        <St.TrackSlot $w={12}>
                            <LockIcon />
                        </St.TrackSlot>
                        <St.TrackSlot $w={40}>
                            <SpeakerIcon />
                        </St.TrackSlot>
                        <St.TrackName $ml={-3} $pt={2}>
                            Audio 1
                        </St.TrackName>
                    </St.TrackLine>
                    <St.TrackLine $mt={8}>
                        <St.TrackSlot $w={40} $ml={12}>
                            <AutomationIcon />
                        </St.TrackSlot>
                    </St.TrackLine>
                </TrackRow>
                <TrackRow h={80} master>
                    <St.TrackLine>
                        <St.TrackSlot $w={12}>
                            <LockIcon />
                        </St.TrackSlot>
                        <St.TrackName $ml={36} $pt={4}>
                            Master
                        </St.TrackName>
                    </St.TrackLine>
                </TrackRow>
                <TrackRow h={28} />
                <St.BottomBar>
                    <St.ZoomCell>
                        <MountainIcon w={10} h={5} />
                        <St.ZoomTrack>
                            <St.ZoomDot />
                        </St.ZoomTrack>
                        <MountainIcon w={14} h={8} />
                    </St.ZoomCell>
                </St.BottomBar>
            </St.EditorMain>
        </St.EditorBody>
    </St.Panel>
);

const MetersPanel = () => (
    <St.Panel $w={158}>
        <St.Strip>
            <Tab label="Meters" active />
            <StripMenu />
        </St.Strip>
        <St.MeterBody>
            <St.MeterScale>
                {meterTicks.map((t) => (
                    <St.MeterTick key={t}>{t}</St.MeterTick>
                ))}
            </St.MeterScale>
            <St.MeterBars>
                <St.MeterBar />
                <St.MeterBar />
            </St.MeterBars>
        </St.MeterBody>
    </St.Panel>
);

export default function App() {
    return (
        <St.Page>
            <GlobalStyle />
            <TitleBar />
            <St.Workspace>
                <St.TopRow>
                    <TrimmerPanel />
                    <ViewerPanel />
                </St.TopRow>
                <St.BottomRow>
                    <MediaPanel />
                    <EditorPanel />
                    <MetersPanel />
                </St.BottomRow>
            </St.Workspace>
        </St.Page>
    );
}
